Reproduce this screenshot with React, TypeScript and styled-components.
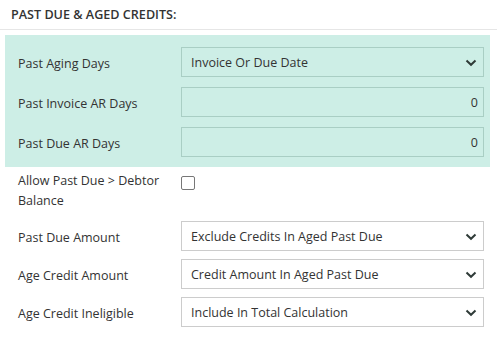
import React from 'react';
import styled, { createGlobalStyle } from 'styled-components';

const GlobalStyle = createGlobalStyle`
  body {
    margin: 0;
    background: #fff;
    font-family: "Open Sans", "Liberation Sans", sans-serif;
    font-size: 12.5px;
    color: #333;
  }
`;

const Page = styled.div`
  width: 497px;
`;

const Header = styled.div`
  height: 30px;
  padding-left: 11px;
  padding-bottom: 1px;
  display: flex;
  align-items: center;
  font-weight: 600;
  font-size: 12.6px;
  text-transform: uppercase;
  border-bottom: 1px solid #e6e6e6;
  box-sizing: border-box;
`;

const Highlight = styled.div`
  margin: 5px 7px 0 5px;
  padding: 12px 6px 10px 13px;
  background: #cdeee6;
  display: flex;
  flex-direction: column;
  gap: 10px;
`;

const Plain = styled.div`
  padding: 4px 13px 0 18px;
  display: flex;
  flex-direction: column;
  gap: 8px;
`;

const Row = styled.div<{ $tall?: boolean }>`
  display: flex;
  align-items: ${(p) => (p.$tall ? 'flex-start' : 'center')};
  min-height: 30px;
  margin-bottom: ${(p) => (p.$tall ? '2px' : '0')};
`;

const Label = styled.div<{ $tall?: boolean }>`
  width: 163px;
  flex: none;
  line-height: 20px;
  padding-right: 12px;
  padding-top: ${(p) => (p.$tall ? '0' : '3px')};
  box-sizing: border-box;
`;

const Field = styled.div<{ $tinted?: boolean; $right?: boolean }>`
  flex: 1;
  height: 30px;
  box-sizing: border-box;
  border: 1px solid ${(p) => (p.$tinted ? '#a9cec4' : '#cccccc')};
  background: ${(p) => (p.$tinted ? '#cdeee6' : '#fff')};
  display: flex;
  align-items: center;
  justify-content: ${(p) => (p.$right ? 'flex-end' : 'space-between')};
  padding: 1px 5px 0 9px;
`;

const Chevron = styled.svg`
  width: 12px;
  height: 8px;
  margin-right: 1px;
`;

const Check = styled.span`
  width: 12px;
  height: 12px;
  margin-top: 5px;
  border: 1px solid #777;
  border-radius: 2px;
  background: #fff;
  display: inline-block;
`;

const Down = () => (
  <Chevron viewBox="0 0 12 8">
    <path d="M1.5 1.5 L6 5.8 L10.5 1.5" fill="none" stroke="#2f3b38" strokeWidth="2" />
  </Chevron>
);

const Select = ({ value, tinted }: { value: string; tinted?: boolean }) => (
  <Field $tinted={tinted}>
    <span>{value}</span>
    <Down />
  </Field>
);

export default function App() {
  return (
    <Page>
      <GlobalStyle />
      <Header>Past Due &amp; Aged Credits:</Header>
      <Highlight>
        <Row>
          <Label>Past Aging Days</Label>
          <Select value="Invoice Or Due Date" tinted />
        </Row>
        <Row>
          <Label>Past Invoice AR Days</Label>
          <Field $tinted $right>0</Field>
        </Row>
        <Row>
          <Label>Past Due AR Days</Label>
          <Field $tinted $right>0</Field>
        </Row>
      </Highlight>
      <Plain>
        <Row $tall>
          <Label $tall>Allow Past Due &gt; Debtor Balance</Label>
          <Check />
        </Row>
        <Row>
          <Label>Past Due Amount</Label>
          <Select value="Exclude Credits In Aged Past Due" />
        </Row>
        <Row>
          <Label>Age Credit Amount</Label>
          <Select value="Credit Amount In Aged Past Due" />
        </Row>
        <Row>
          <Label>Age Credit Ineligible</Label>
          <Select value="Include In Total Calculation" />
        </Row>
      </Plain>
    </Page>
  );
}
